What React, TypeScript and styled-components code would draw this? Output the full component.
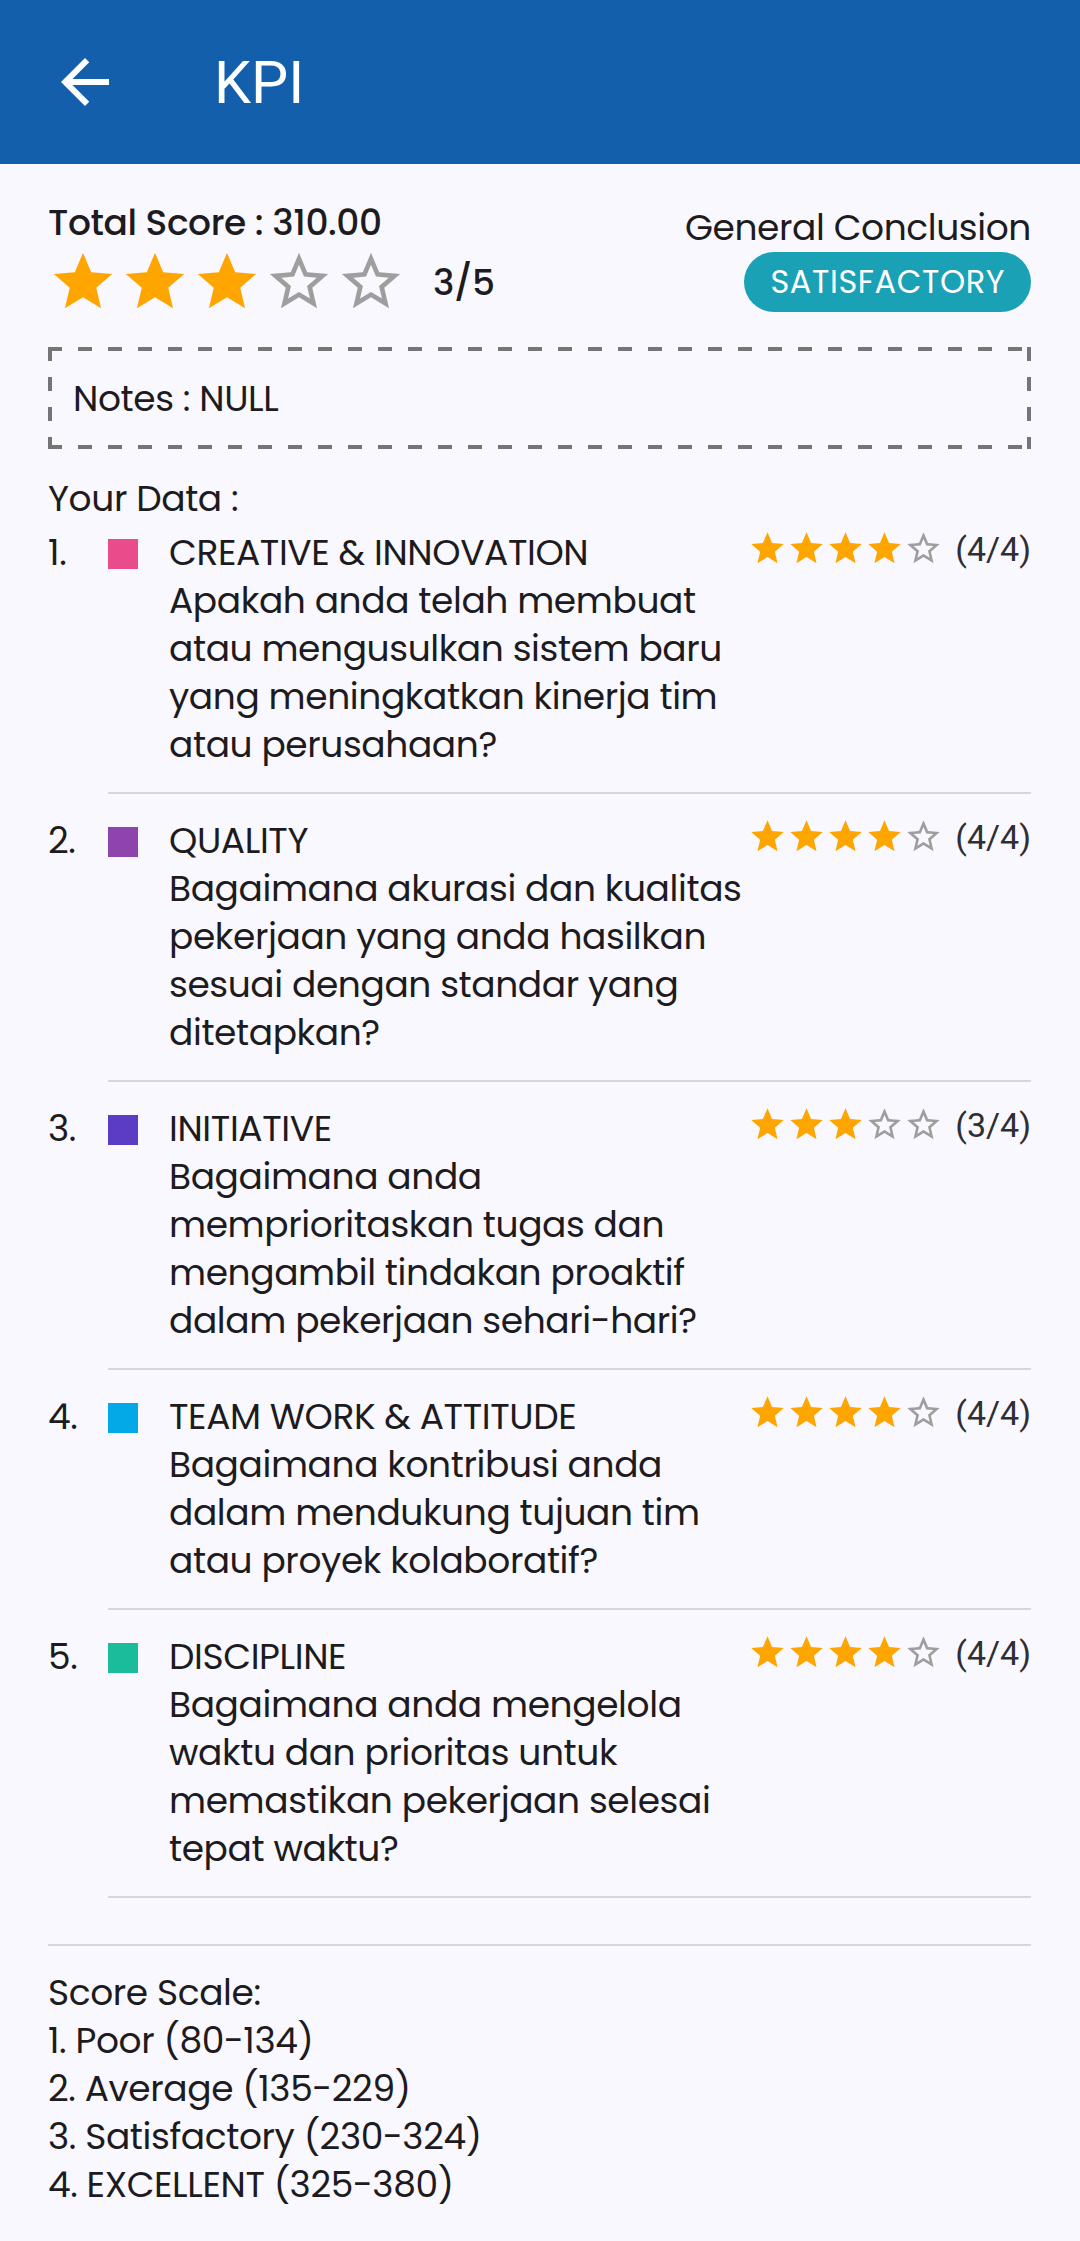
import React from 'react';
import styled, { createGlobalStyle } from 'styled-components';

const GlobalStyle = createGlobalStyle`
    html, body {
        margin: 0;
        padding: 0;
        background: #f8f8fe;
    }
    body {
        font-family: 'Poppins', 'Inter', 'Noto Sans', sans-serif;
        color: #1d1b20;
    }
`;

const Page = styled.div`
    width: 1080px;
    min-height: 2241px;
    background: #f8f8fe;
`;

const AppBar = styled.header`
    height: 164px;
    background: #135fac;
    display: flex;
    align-items: center;
    padding-left: 49px;
    box-sizing: border-box;
`;

const BackButton = styled.button`
    width: 72px;
    height: 72px;
    padding: 0;
    border: none;
    background: transparent;
    display: flex;
    color: #ffffff;
`;

const Title = styled.h1`
    margin: 0 0 0 93px;
    font-family: 'Roboto', sans-serif;
    font-weight: 400;
    font-size: 59px;
    color: #ffffff;
`;

const Content = styled.main`
    padding: 35px 49px 32px 48px;
    font-size: 36px;
    letter-spacing: -0.4px;
`;

const TopRow = styled.section`
    display: flex;
    justify-content: space-between;
    align-items: center;
`;

const ScoreColumn = styled.div`
    display: flex;
    flex-direction: column;
`;

const ScoreLabel = styled.div`
    line-height: 48px;
    font-weight: 500;
`;

const StarRow = styled.div<{ gap: number }>`
    display: flex;
    align-items: center;
    gap: ${props => props.gap}px;
`;

const Ratio = styled.span`
    margin-left: 27px;
    font-weight: 500;
`;

const ConclusionColumn = styled.div`
    display: flex;
    flex-direction: column;
    align-items: flex-end;
`;

const ConclusionLabel = styled.div`
    line-height: 48px;
`;

const Badge = styled.div`
    height: 60px;
    padding: 0 26px;
    border-radius: 30px;
    background: #1aa1b5;
    color: #ffffff;
    font-size: 32px;
    letter-spacing: 0.6px;
    display: flex;
    align-items: center;
`;

const NotesBox = styled.div`
    margin-top: 30px;
    height: 102px;
    box-sizing: border-box;
    padding-left: 25px;
    display: flex;
    align-items: center;
    background:
        linear-gradient(90deg, #757575 14px, transparent 14px) top left / 30px 4px repeat-x,
        linear-gradient(90deg, #757575 14px, transparent 14px) bottom left / 30px 4px repeat-x,
        linear-gradient(180deg, #757575 14px, transparent 14px) top left / 4px 30px repeat-y,
        linear-gradient(180deg, #757575 14px, transparent 14px) top right / 4px 30px repeat-y;
`;

const SectionLabel = styled.div`
    margin-top: 26px;
    line-height: 48px;
`;

const ItemList = styled.ol`
    list-style: none;
    margin: 6px 0 0;
    padding: 0;
`;

const Item = styled.li`
    display: grid;
    grid-template-columns: 60px 1fr;
`;

const ItemNumber = styled.span`
    line-height: 48px;
`;

const ItemBody = styled.div`
    display: flex;
    flex-direction: column;
    min-width: 0;
`;

const ItemRow = styled.div`
    display: flex;
    align-items: flex-start;
`;

const Swatch = styled.span<{ color: string }>`
    width: 30px;
    height: 30px;
    margin-top: 10px;
    flex-shrink: 0;
    background: ${props => props.color};
`;

const ItemText = styled.div`
    margin-left: 31px;
    flex: 1;
    min-width: 0;
    line-height: 48px;
    white-space: nowrap;
`;

const TextLine = styled.span`
    display: block;
`;

const ItemRating = styled.div`
    display: flex;
    align-items: center;
    flex-shrink: 0;
    height: 39px;
`;

const RatingCount = styled.span`
    margin-left: 12px;
    font-family: 'Roboto', sans-serif;
    font-size: 34px;
    color: #2e2e33;
    letter-spacing: 0;
`;

const Divider = styled.hr`
    margin: 23px 0;
    height: 2px;
    border: none;
    background: #d6d6dc;
`;

const ScaleBlock = styled.div`
    line-height: 48px;
`;

const STAR_FILLED = 'M12 17.27L18.18 21l-1.64-7.03L22 9.24l-7.19-.61L12 2 9.19 8.63 2 9.24l5.46 4.73L5.82 21z';
const STAR_BORDER = 'M22 9.24l-7.19-.62L12 2 9.19 8.63 2 9.24l5.46 4.73L5.82 21 12 17.27 18.18 21l-1.63-7.03L22 9.24zM12 15.4l-3.76 2.27 1-4.28-3.32-2.88 4.38-.38L12 6.1l1.71 4.04 4.38.38-3.32 2.88 1 4.28L12 15.4z';

function Star({ filled, size }: { filled: boolean, size: number }) {
    return (
        <svg width={size} height={size} viewBox="0 0 24 24">
            <path d={filled ? STAR_FILLED : STAR_BORDER} fill={filled ? '#ffa500' : '#9e9e9e'} />
        </svg>
    );
}

function Stars({ value, size, gap }: { value: number, size: number, gap: number }) {
    return (
        <StarRow gap={gap}>
            {[1, 2, 3, 4, 5].map(i => <Star key={i} filled={i <= value} size={size} />)}
        </StarRow>
    );
}

const items = [
    {
        title: 'CREATIVE & INNOVATION',
        color: '#e84c8b',
        rating: 4,
        lines: ['Apakah anda telah membuat', 'atau mengusulkan sistem baru', 'yang meningkatkan kinerja tim', 'atau perusahaan?'],
    },
    {
        title: 'QUALITY',
        color: '#8e44ad',
        rating: 4,
        lines: ['Bagaimana akurasi dan kualitas', 'pekerjaan yang anda hasilkan', 'sesuai dengan standar yang', 'ditetapkan?'],
    },
    {
        title: 'INITIATIVE',
        color: '#5b3cc4',
        rating: 3,
        lines: ['Bagaimana anda', 'memprioritaskan tugas dan', 'mengambil tindakan proaktif', 'dalam pekerjaan sehari-hari?'],
    },
    {
        title: 'TEAM WORK & ATTITUDE',
        color: '#03a9e6',
        rating: 4,
        lines: ['Bagaimana kontribusi anda', 'dalam mendukung tujuan tim', 'atau proyek kolaboratif?'],
    },
    {
        title: 'DISCIPLINE',
        color: '#1abc9c',
        rating: 4,
        lines: ['Bagaimana anda mengelola', 'waktu dan prioritas untuk', 'memastikan pekerjaan selesai', 'tepat waktu?'],
    },
];

const scale = ['Score Scale:', '1. Poor (80-134)', '2. Average (135-229)', '3. Satisfactory (230-324)', '4. EXCELLENT (325-380)'];

export default function App() {
    return (
        <Page>
            <GlobalStyle />
            <AppBar>
                <BackButton aria-label="back">
                    <svg width="72" height="72" viewBox="0 0 24 24">
                        <path d="M20 11H7.83l5.59-5.59L12 4l-8 8 8 8 1.41-1.41L7.83 13H20v-2z" fill="currentColor" />
                    </svg>
                </BackButton>
                <Title>KPI</Title>
            </AppBar>
            <Content>
                <TopRow>
                    <ScoreColumn>
                        <ScoreLabel>Total Score : 310.00</ScoreLabel>
                        <StarRow gap={0}>
                            <Stars value={3} size={70} gap={2} />
                            <Ratio>3/5</Ratio>
                        </StarRow>
                    </ScoreColumn>
                    <ConclusionColumn>
                        <ConclusionLabel>General Conclusion</ConclusionLabel>
                        <Badge>SATISFACTORY</Badge>
                    </ConclusionColumn>
                </TopRow>

                <NotesBox>Notes : NULL</NotesBox>

                <SectionLabel>Your Data :</SectionLabel>
                <ItemList>
                    {items.map((item, index) => (
                        <Item key={item.title}>
                            <ItemNumber>{index + 1}.</ItemNumber>
                            <ItemBody>
                                <ItemRow>
                                    <Swatch color={item.color} />
                                    <ItemText>
                                        <TextLine>{item.title}</TextLine>
                                        {item.lines.map(line => <TextLine key={line}>{line}</TextLine>)}
                                    </ItemText>
                                    <ItemRating>
                                        <Stars value={item.rating} size={39} gap={0} />
                                        <RatingCount>({item.rating}/4)</RatingCount>
                                    </ItemRating>
                                </ItemRow>
                                <Divider />
                            </ItemBody>
                        </Item>
                    ))}
                </ItemList>
                <Divider />
                <ScaleBlock>
                    {scale.map(line => <TextLine key={line}>{line}</TextLine>)}
                </ScaleBlock>
            </Content>
        </Page>
    );
}
